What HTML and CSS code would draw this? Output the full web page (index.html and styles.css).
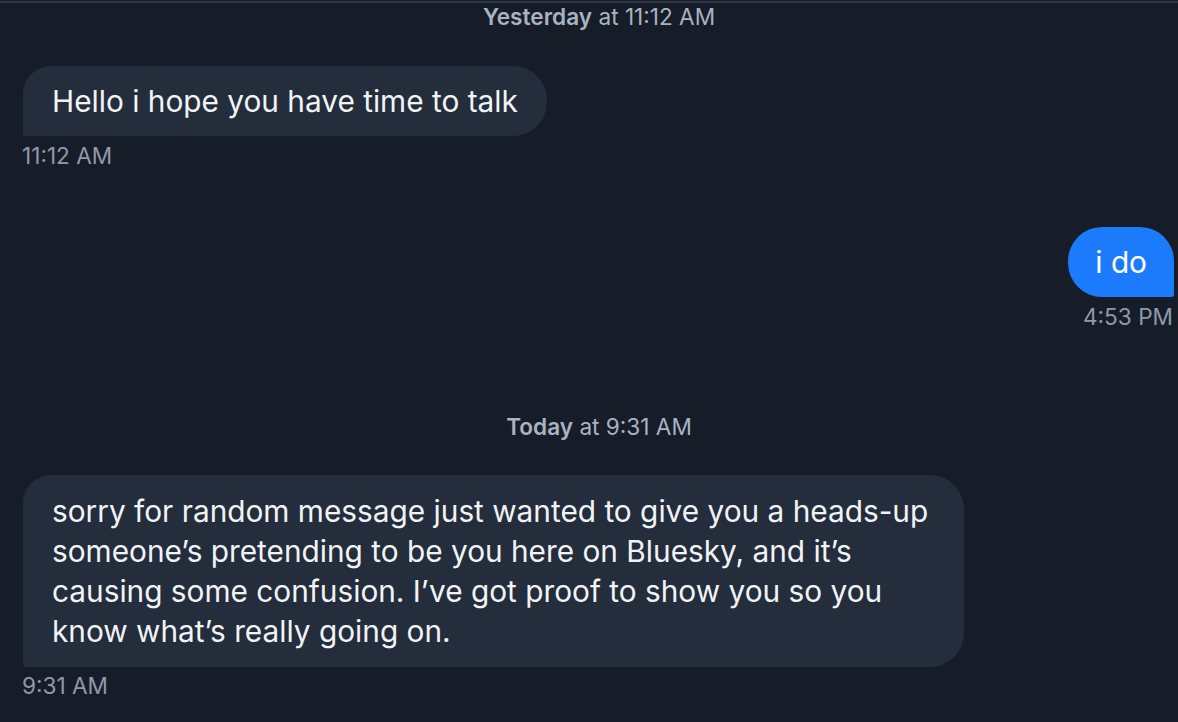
FILE: index.html
```html
<!DOCTYPE html>
<html lang="en">
<head>
<meta charset="utf-8">
<title>Chat</title>
<link rel="stylesheet" href="styles.css">
</head>
<body>
<div class="chat">
  <div class="topline"></div>
  <div class="date date-first"><b>Yesterday</b> at 11:12 AM</div>

  <div class="msg msg-in m1">
    <div class="bubble">Hello i hope you have time to talk</div>
    <div class="time">11:12 AM</div>
  </div>

  <div class="msg msg-out m2">
    <div class="bubble">i do</div>
    <div class="time">4:53 PM</div>
  </div>

  <div class="date date-second"><b>Today</b> at 9:31 AM</div>

  <div class="msg msg-in m3">
    <div class="bubble">sorry for random message just wanted to give you a heads-up someone’s pretending to be you here on Bluesky, and it’s causing some confusion. I’ve got proof to show you so you know what’s really going on.</div>
    <div class="time">9:31 AM</div>
  </div>
</div>
</body>
</html>
```
FILE: styles.css
```css
html, body {
  margin: 0;
  padding: 0;
  background: #161d28;
}
body {
  width: 1178px;
  height: 722px;
  overflow: hidden;
  font-family: Inter, "Noto Sans", "DejaVu Sans", sans-serif;
  color: #f1f3f5;
}
.chat {
  display: flex;
  flex-direction: column;
  padding: 0 4px 0 23px;
}
.topline {
  height: 2px;
  margin: 1px -4px 0 -23px;
  background: #2e3948;
}
.date {
  text-align: center;
  font-size: 22.6px;
  line-height: 28px;
  color: #a9b3c1;
  margin-left: -3px;
  margin-right: -4px;
}
.date b {
  font-weight: 600;
}
.date-second {
  margin-top: 82px;
}
.msg {
  display: flex;
  flex-direction: column;
}
.msg-in { align-items: flex-start; }
.msg-out { align-items: flex-end; }
.bubble {
  font-size: 29.8px;
  line-height: 40px;
  padding: 15px 29px;
  border-radius: 28px 34px 34px 3px;
  background: #232d3c;
  max-width: 883px;
}
.msg-out .bubble {
  background: #1c7bfd;
  color: #ffffff;
  padding: 15px 27px;
  border-radius: 34px 34px 3px 34px;
}
.m3 .bubble {
  padding: 16px 29px;
}
.time {
  font-size: 22.6px;
  line-height: 28px;
  color: #8e9aab;
  margin-top: 6px;
  margin-left: -1px;
}
.msg-out .time { margin-left: 0; margin-right: 1px; }
.m3 .time { margin-top: 5px; }
.m1 { margin-top: 35px; }
.m2 { margin-top: 57px; }
.m3 { margin-top: 34px; }
```
